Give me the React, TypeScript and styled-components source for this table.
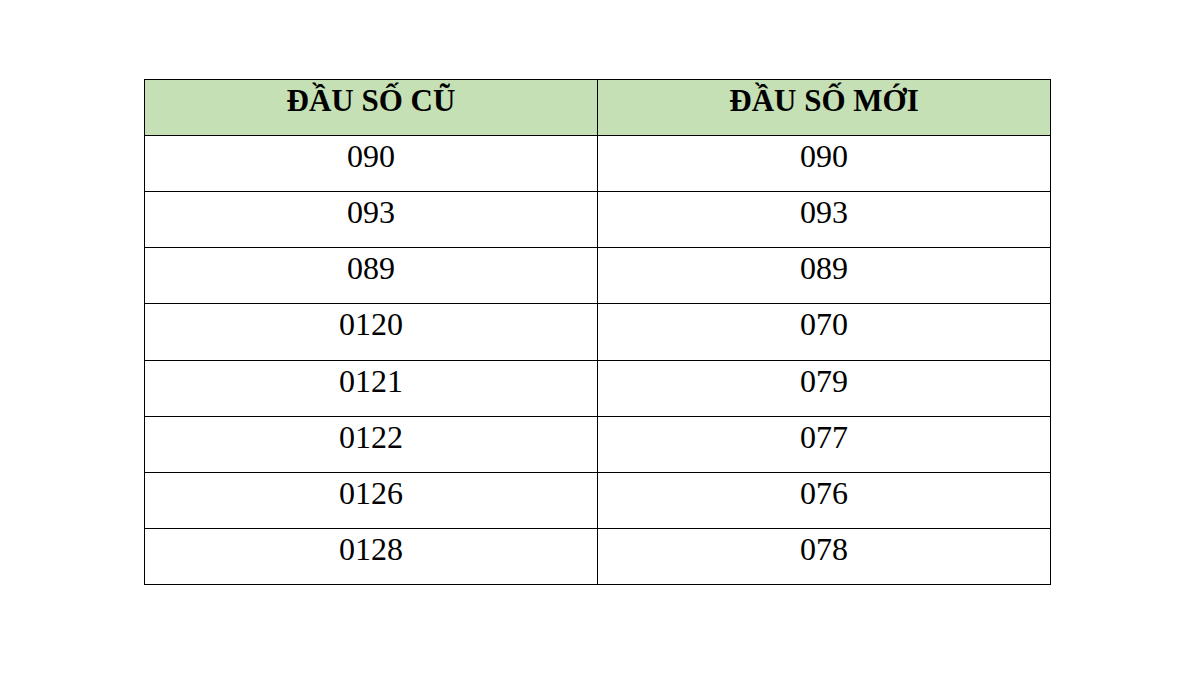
import React from "react";
import styled, { createGlobalStyle } from "styled-components";

const Global = createGlobalStyle`
  html, body { margin: 0; padding: 0; background: #ffffff; }
  body { font-family: "Liberation Serif", "Times New Roman", serif; color: #000; }
`;

const Page = styled.div`
  width: 1200px;
  height: 675px;
  box-sizing: border-box;
  padding: 79px 0 0 144px;
  background: #ffffff;
`;

const Grid = styled.div`
  display: grid;
  grid-template-columns: 453px 453px;
  grid-auto-rows: 56.12px;
  width: max-content;
  border-top: 1px solid #000;
  border-left: 1px solid #000;
`;

const Cell = styled.div<{ $head?: boolean }>`
  box-sizing: border-box;
  border-right: 1px solid #000;
  border-bottom: 1px solid #000;
  background: ${(p) => (p.$head ? "#c5e0b4" : "#ffffff")};
  font-family: "Liberation Serif", "Times New Roman", serif;
  font-weight: ${(p) => (p.$head ? 700 : 400)};
  font-size: ${(p) => (p.$head ? "31px" : "32px")};
  line-height: ${(p) => (p.$head ? "31px" : "32px")};
  padding-top: ${(p) => (p.$head ? "5px" : "4px")};
  text-align: center;
  color: #000;
`;

const rows: [string, string][] = [
  ["090", "090"],
  ["093", "093"],
  ["089", "089"],
  ["0120", "070"],
  ["0121", "079"],
  ["0122", "077"],
  ["0126", "076"],
  ["0128", "078"],
];

export default function App() {
  return (
    <>
      <Global />
      <Page>
        <Grid>
          <Cell $head>ĐẦU SỐ CŨ</Cell>
          <Cell $head>ĐẦU SỐ MỚI</Cell>
          {rows.map(([a, b], i) => (
            <React.Fragment key={i}>
              <Cell>{a}</Cell>
              <Cell>{b}</Cell>
            </React.Fragment>
          ))}
        </Grid>
      </Page>
    </>
  );
}
